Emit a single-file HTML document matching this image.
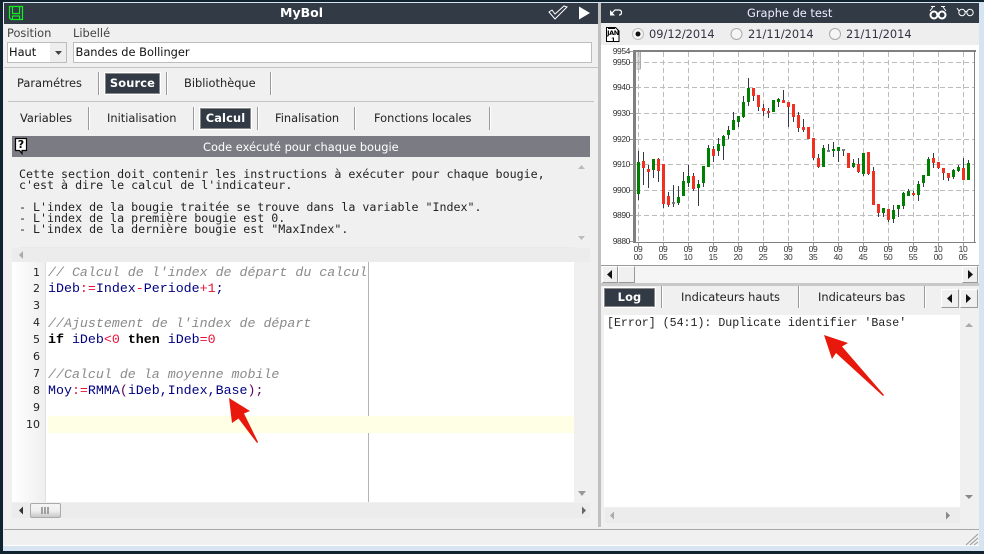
<!DOCTYPE html>
<html><head><meta charset="utf-8"><style>
html,body{margin:0;padding:0}
body{width:984px;height:554px;overflow:hidden;position:relative;background:#d6e4f2;font-family:"DejaVu Sans",sans-serif;font-size:11.4px;color:#222}
div,span.a{position:absolute}
.t{position:absolute;white-space:nowrap;line-height:14px}
.sep{position:absolute;width:1px;background:#9a9a9a;border-right:1px solid #fff}
.btn{position:absolute;background:#323a45;color:#fff;font-weight:bold;text-align:center;border:1px solid #8a8a8a;box-shadow:0 0 0 1px #fff;box-sizing:border-box;white-space:nowrap;letter-spacing:.15px}
.mono{position:absolute;white-space:pre;font-family:"DejaVu Sans Mono",monospace;font-size:11.65px;line-height:11px;color:#222}
.code{position:absolute;left:48px;white-space:pre;font-family:"Liberation Mono",monospace;font-size:13.3px;line-height:16px;color:#000080}
.c{color:#8a8a8a;font-style:italic}.r{color:#e8103a}.k{color:#000;font-weight:bold}.p{color:#600060}
.n{position:absolute;left:14px;width:26px;text-align:right;font-family:"DejaVu Sans",sans-serif;font-size:11px;line-height:14px;color:#222}
svg{position:absolute}
.g3b{position:absolute;background:#f0f0f0;border:1px solid #999;border-top-color:#fff;border-left-color:#fff;box-sizing:border-box}
</style></head><body>
<div style="left:0;top:0;width:984px;height:2px;background:#10232f"></div>
<div style="left:0;top:2px;width:984px;height:1px;background:#d6e4f2"></div>
<div style="left:0;top:0;width:3px;height:554px;background:#10232f"></div>
<div style="left:3px;top:3px;width:1px;height:543px;background:#e8eef4"></div>
<div style="left:0;top:551px;width:984px;height:3px;background:#10232f"></div>
<div style="left:4px;top:3px;width:975px;height:543px;background:#f0f0f0"></div>

<!-- left header -->
<div style="left:4px;top:3px;width:594px;height:21px;background:#323a45"></div>
<svg style="left:8px;top:5px" width="16" height="16" viewBox="0 0 16 16"><path d="M1.500 1.500H14.500V14.500H3L1.500 13ZM4.500 1.500V8.500H11.500V1.500M4.500 14.500V11H11.500V14.500" fill="none" stroke="#12f020" stroke-width="1.200"/></svg>
<div class="t" style="left:280px;top:6px;color:#fff;font-weight:bold;font-size:12.5px;font-family:'DejaVu Sans',sans-serif">MyBol</div>
<svg style="left:546px;top:4px" width="46" height="18" viewBox="0 0 46 18"><path d="M3 8L9 15L21 3L18 2L9 10L6 6Z" fill="none" stroke="#fff" stroke-width="1"/><path d="M33 2.500V15.500L44 9Z" fill="#fff"/></svg>

<div class="t" style="left:7px;top:26px;color:#444">Position</div>
<div class="t" style="left:73px;top:26px;color:#444">Libellé</div>
<div style="left:7px;top:42px;width:60px;height:21px;box-sizing:border-box;border:1px solid #bdbdbd;background:#fff"></div>
<div style="left:50px;top:43px;width:16px;height:19px;background:#eee"></div>
<svg style="left:50px;top:43px" width="16" height="19"><path d="M5 8H12L8.500 12Z" fill="#444"/></svg>
<div class="t" style="left:9px;top:45px;color:#111">Haut</div>
<div style="left:73px;top:42px;width:519px;height:21px;box-sizing:border-box;border:1px solid #bdbdbd;background:#fff"></div>
<div class="t" style="left:75.500px;top:45px;color:#111">Bandes de Bollinger</div>
<div style="left:4px;top:67px;width:594px;height:1px;background:#c4c4c4"></div>

<div class="t" style="left:17px;top:76px">Paramétres</div>
<div class="sep" style="left:98px;top:72px;height:23px"></div>
<div class="btn" style="left:105px;top:73px;width:55px;height:21px;line-height:19px">Source</div>
<div class="sep" style="left:166px;top:72px;height:23px"></div>
<div class="t" style="left:184px;top:76px">Bibliothèque</div>
<div class="sep" style="left:270px;top:72px;height:23px"></div>
<div style="left:8px;top:101px;width:586px;height:1px;background:#c4c4c4"></div>

<div class="t" style="left:20px;top:111px">Variables</div>
<div class="sep" style="left:88px;top:107px;height:23px"></div>
<div class="t" style="left:107px;top:111px">Initialisation</div>
<div class="sep" style="left:193px;top:107px;height:23px"></div>
<div class="btn" style="left:200px;top:108px;width:51px;height:21px;line-height:19px">Calcul</div>
<div class="sep" style="left:257px;top:107px;height:23px"></div>
<div class="t" style="left:275px;top:111px">Finalisation</div>
<div class="sep" style="left:354px;top:107px;height:23px"></div>
<div class="t" style="left:374px;top:111px">Fonctions locales</div>
<div class="sep" style="left:489px;top:107px;height:23px"></div>

<div style="left:12px;top:136px;width:578px;height:21px;background:#7b7b83"></div>
<svg style="left:14px;top:137px" width="15" height="18" viewBox="0 0 15 18"><path d="M1.500 1.500H12.500V13.500H8V16.500L5.500 13.500H1.500Z" fill="#fff" stroke="#000" stroke-width="1.200"/></svg>
<div class="t" style="left:14px;top:138px;width:14px;text-align:center;color:#000;font-weight:bold;font-size:11px;line-height:13px">?</div>
<div class="t" style="left:203px;top:140px;color:#fff">Code exécuté pour chaque bougie</div>

<div class="mono" style="left:19px;top:168.500px">Cette section doit contenir les instructions à exécuter pour chaque bougie,
c'est à dire le calcul de l'indicateur.

- L'index de la bougie traitée se trouve dans la variable "Index".
- L'index de la première bougie est 0.
- L'index de la dernière bougie est "MaxIndex".</div>
<svg style="left:12px;top:157px" width="578" height="106"><path d="M566 12L569.500 8L573 12Z" fill="#bbb"/><path d="M566 79L569.500 83L573 79Z" fill="#bbb"/><path d="M6 91H563" stroke="#e4e4e4" fill="none"/></svg>
<div style="left:12px;top:248px;width:578px;height:14px;background:#ececec"></div>
<svg style="left:17px;top:250px" width="8" height="10"><path d="M2 5L6 1V9Z" fill="#aaa"/></svg>

<!-- editor -->
<div style="left:12px;top:262px;width:562px;height:240px;background:#fff"></div>
<div style="left:12px;top:262px;width:33px;height:240px;background:linear-gradient(90deg,#fff,#efefef)"></div>
<div style="left:45px;top:262px;width:1px;height:240px;background:#e0e0e0"></div>
<div style="left:368px;top:262px;width:1px;height:240px;background:#b4b4b4"></div>
<div style="left:48px;top:416px;width:526px;height:17px;background:#ffffe6"></div>
<div class="n" style="top:266px">1</div><div class="n" style="top:282px">2</div><div class="n" style="top:299px">3</div><div class="n" style="top:316px">4</div><div class="n" style="top:333px">5</div><div class="n" style="top:350px">6</div><div class="n" style="top:367px">7</div><div class="n" style="top:384px">8</div><div class="n" style="top:401px">9</div><div class="n" style="top:418px">10</div>
<div class="code" style="top:265px"><span class="c">// Calcul de l'index de départ du calcul</span></div>
<div class="code" style="top:281px">iDeb<span class="r">:=</span>Index<span class="r">-</span>Periode<span class="r">+1</span>;</div>
<div class="code" style="top:316px"><span class="c">//Ajustement de l'index de départ</span></div>
<div class="code" style="top:332px"><span class="k">if</span> iDeb<span class="r">&lt;0</span> <span class="k">then</span> iDeb<span class="r">=0</span></div>
<div class="code" style="top:367px"><span class="c">//Calcul de la moyenne mobile</span></div>
<div class="code" style="top:383px">Moy<span class="r">:=</span>RMMA<span class="p">(</span>iDeb,Index,Base<span class="p">);</span></div>
<svg style="left:574px;top:262px" width="16" height="256"><path d="M4 229H12L8 234Z" fill="#999"/></svg>
<div style="left:12px;top:503px;width:578px;height:15px;background:#ececec"></div>
<svg style="left:17px;top:505px" width="8" height="11"><path d="M2 5.500L6 1.500V9.500Z" fill="#333"/></svg>
<div style="left:30px;top:503px;width:31px;height:15px;box-sizing:border-box;border:1px solid #aaa;border-radius:2px;background:linear-gradient(#f4f4f4,#f0f0f0 50%,#c8c8c8)"></div>
<svg style="left:40px;top:506px" width="10" height="9"><path d="M2 1V8M5 1V8M8 1V8" stroke="#888" stroke-width="1.500"/></svg>
<svg style="left:580px;top:503px" width="10" height="15"><path d="M2 3.500L6 7.500L2 11.500Z" fill="#666"/></svg>

<!-- splitter -->
<div style="left:598px;top:3px;width:3px;height:524px;background:#c0c0c0"></div>

<!-- right header -->
<div style="left:601px;top:3px;width:378px;height:20px;background:#323a45"></div>
<svg style="left:609px;top:7px" width="14" height="12" viewBox="0 0 14 12"><path d="M1 3L1 8.500L6 8.500Z" fill="#fff"/><path d="M3 6L6 3H10Q12.500 3 12.500 5.500Q12.500 8 10 8" fill="none" stroke="#fff" stroke-width="1.200"/></svg>
<div class="t" style="left:747px;top:6px;color:#eef;font-size:11.4px">Graphe de test</div>
<svg style="left:929px;top:5px" width="46" height="16" viewBox="0 0 46 16"><circle cx="5" cy="10" r="3.500" fill="none" stroke="#fff" stroke-width="2"/><circle cx="13" cy="10" r="3.500" fill="none" stroke="#fff" stroke-width="2"/><path d="M1 6L4 2M17 6L14 2M7 9H11M2 1.500H6M12 1.500H16" stroke="#fff" fill="none"/><circle cx="33" cy="7.500" r="3.200" fill="none" stroke="#fff"/><circle cx="41" cy="7.500" r="3.200" fill="none" stroke="#fff"/><path d="M36 6.500H38M30 6L28 3" stroke="#fff" fill="none"/></svg>
<div style="left:601px;top:23px;width:378px;height:22px;background:#eee"></div>
<svg style="left:606px;top:26px" width="14" height="17" viewBox="0 0 14 17"><path d="M0.500 1.500H9.500L13 5V15.500H0.500Z" fill="#fff" stroke="#000"/><path d="M2 2.500H9" stroke="#000"/></svg>
<div class="t" style="left:606px;top:30px;width:14px;text-align:center;font-size:6.500px;font-weight:bold;color:#000;line-height:6.500px;letter-spacing:-.4px">JAN<br>1</div>
<svg style="left:630px;top:26px" width="220" height="16"><circle cx="8" cy="8" r="5.500" fill="#f6f6f6" stroke="#bbb"/><circle cx="8" cy="8" r="2.500" fill="#111"/><circle cx="106.500" cy="8" r="5.500" fill="#f6f6f6" stroke="#aaa"/><circle cx="205" cy="8" r="5.500" fill="#f6f6f6" stroke="#aaa"/></svg>
<div class="t" style="left:649px;top:27px;color:#334">09/12/2014</div>
<div class="t" style="left:748px;top:27px;color:#334">21/11/2014</div>
<div class="t" style="left:846px;top:27px;color:#334">21/11/2014</div>

<!-- chart -->
<div style="left:601px;top:45px;width:378px;height:220px;background:#fff"></div>
<svg style="left:601px;top:45px" width="378" height="220" viewBox="601 45 378 220" font-family="Liberation Sans, sans-serif" font-size="8.500" fill="#333" letter-spacing="-.4">
<g stroke="#bcbcbc" stroke-dasharray="5 3" fill="none"><path d="M636 62.500H974M636 87.500H974M636 113.500H974M636 139.500H974M636 164.500H974M636 190.500H974M636 215.500H974"/><path d="M638.500 52V242M663.500 52V242M688.500 52V242M713.500 52V242M738.500 52V242M763.500 52V242M788.500 52V242M813.500 52V242M838.500 52V242M863.500 52V242M888.500 52V242M913.500 52V242M938.500 52V242M963.500 52V242"/></g>
<path d="M634.500 51V243M633.500 51V243M635.500 51V243M633 50.500H976M633 51.500H976M974.500 50V243M633 242.500H976" stroke="#808080" fill="none"/>
<path d="M629 51.500H634M629 62.500H634M629 87.500H634M629 113.500H634M629 139.500H634M629 164.500H634M629 190.500H634M629 215.500H634M629 241.500H634M638.500 243V247M663.500 243V247M688.500 243V247M713.500 243V247M738.500 243V247M763.500 243V247M788.500 243V247M813.500 243V247M838.500 243V247M863.500 243V247M888.500 243V247M913.500 243V247M938.500 243V247M963.500 243V247" stroke="#999" fill="none"/>
<path d="M636.500 53H640.500M636.500 55H640.500M636.500 57H640.500M636.500 59H640.500M636.500 61H640.500M636.500 63H640.500M636.500 65H640.500M636.500 67H640.500M636.500 69H640.500M640.500 52V69" stroke="#aaa" fill="none"/>
<path stroke="#333a44" fill="none" d="M638.500 151V200M643.500 152V185M648.500 165V188M653.500 159V178M658.500 158V182M663.500 164V208M668.500 192V207M673.500 185V207M678.500 186V205M683.500 172V196M688.500 165V187M693.500 173V191M698.500 180V206M703.500 166V187M708.500 145V167M713.500 146V162M718.500 138V156M723.500 135V160M728.500 126V139M733.500 112V130M738.500 116V127M743.500 96V118M748.500 78V106M753.500 88V101M758.500 95V111M763.500 104V116M768.500 108V118M773.500 100V112M778.500 98V107M783.500 90V103M788.500 102V127M793.500 104V122M798.500 112V132M803.500 119V132M808.500 127V139M813.500 138V160M818.500 154V168M823.500 145V167M828.500 144V152M833.500 142V157M838.500 147V162M843.500 149V156M848.500 153V168M853.500 159V168M858.500 158V173M863.500 153V176M868.500 152V175M873.500 167V205M878.500 204V217M883.500 208V217M888.500 209V222M893.500 205V223M898.500 205V217M903.500 192V209M908.500 189V196M913.500 191V196M918.500 181V201M923.500 175V187M928.500 157V176M933.500 153V168M938.500 162V169M943.500 168V180M948.500 173V181M953.500 169V179M958.500 165V172M963.500 158V180M968.500 160V180"/>
<path stroke="#008000" stroke-width="3" fill="none" d="M638.500 162V194M653.500 159V170M678.500 197V203M683.500 181V196M688.500 176V183M698.500 184V188M703.500 166V183M708.500 148V167M718.500 144V151M723.500 136V146M728.500 130V135M733.500 120V130M738.500 116V122M743.500 102V117M748.500 88V102M773.500 100V112M778.500 99V102M823.500 148V167M833.500 149V151M838.500 147V151M853.500 163V167M863.500 153V174M883.500 208V213M893.500 210V219M898.500 205V209M903.500 193V206M908.500 191V196M918.500 184V195M923.500 175V183M928.500 159V176M953.500 170V177M958.500 167V171M968.500 163V180"/>
<path stroke="#f03020" stroke-width="3" fill="none" d="M643.500 161V168M648.500 169V172M658.500 159V171M663.500 164V204M668.500 196V205M693.500 176V189M713.500 149V156M753.500 88V96M758.500 95V107M763.500 108V111M768.500 111V113M783.500 100V103M788.500 102V107M793.500 104V117M798.500 115V128M803.500 127V130M808.500 127V139M813.500 138V158M818.500 158V167M848.500 153V168M858.500 164V172M868.500 152V174M873.500 171V205M878.500 204V213M888.500 209V220M913.500 193V195M933.500 158V163M938.500 162V168M943.500 168V173M948.500 173V178M963.500 168V180"/>
<path stroke="#777a80" stroke-width="3" fill="none" d="M673.500 202V204M828.500 150V152M843.500 149V151"/>
<g text-anchor="end"><text x="630" y="54">9954</text><text x="630" y="65">9950</text><text x="630" y="90">9940</text><text x="630" y="116">9930</text><text x="630" y="142">9920</text><text x="630" y="167">9910</text><text x="630" y="193">9900</text><text x="630" y="218">9890</text><text x="630" y="244">9880</text></g>
<g text-anchor="middle"><text x="638" y="252">09</text><text x="638" y="260">00</text><text x="663" y="252">09</text><text x="663" y="260">05</text><text x="688" y="252">09</text><text x="688" y="260">10</text><text x="713" y="252">09</text><text x="713" y="260">15</text><text x="738" y="252">09</text><text x="738" y="260">20</text><text x="763" y="252">09</text><text x="763" y="260">25</text><text x="788" y="252">09</text><text x="788" y="260">30</text><text x="813" y="252">09</text><text x="813" y="260">35</text><text x="838" y="252">09</text><text x="838" y="260">40</text><text x="863" y="252">09</text><text x="863" y="260">45</text><text x="888" y="252">09</text><text x="888" y="260">50</text><text x="913" y="252">09</text><text x="913" y="260">55</text><text x="938" y="252">10</text><text x="938" y="260">00</text><text x="963" y="252">10</text><text x="963" y="260">05</text></g>
</svg>
<div style="left:601px;top:265px;width:378px;height:18px;background:#f5f5f5;border-top:1px solid #999;box-sizing:border-box"></div>
<div class="g3b" style="left:602px;top:266px;width:16px;height:17px"></div>
<svg style="left:602px;top:266px" width="16" height="17"><path d="M5 8.500L10 4V13Z" fill="#111"/></svg>
<div class="g3b" style="left:618px;top:266px;width:17px;height:17px"></div>
<div class="g3b" style="left:962px;top:266px;width:16px;height:17px"></div>
<svg style="left:962px;top:266px" width="16" height="17"><path d="M6 4L11 8.500L6 13Z" fill="#111"/></svg>
<div style="left:601px;top:283px;width:378px;height:3px;background:#c8c8c8"></div>

<!-- bottom tabs -->
<div class="btn" style="left:604px;top:288px;width:51px;height:19px;line-height:17px">Log</div>
<div class="sep" style="left:661px;top:286px;height:22px"></div>
<div class="t" style="left:681px;top:290px">Indicateurs hauts</div>
<div class="sep" style="left:798px;top:286px;height:22px"></div>
<div class="t" style="left:818px;top:290px">Indicateurs bas</div>
<div class="sep" style="left:924px;top:286px;height:22px"></div>
<div class="g3b" style="left:941px;top:289px;width:18px;height:19px"></div>
<div class="g3b" style="left:960px;top:289px;width:18px;height:19px"></div>
<svg style="left:941px;top:289px" width="37" height="19"><path d="M6 9.500L11 5V14Z" fill="#111"/><path d="M25 5L30 9.500L25 14Z" fill="#111"/></svg>

<div style="left:604px;top:315px;width:356px;height:192px;background:#fff"></div>
<div style="left:607px;top:317px;position:absolute;white-space:pre;font-family:'Liberation Mono',monospace;font-size:11.600px;line-height:14px;color:#222">[Error] (54:1): Duplicate identifier 'Base'</div>
<svg style="left:960px;top:315px" width="18" height="190"><path d="M5 12L9 8L13 12Z" fill="#aaa"/><path d="M5 180H13L9 184Z" fill="#888"/></svg>
<div style="left:605px;top:508px;width:355px;height:15px;background:#ececec"></div>
<svg style="left:608px;top:510px" width="346" height="11"><path d="M2 5.500L6 1.500V9.500Z" fill="#aaa"/><path d="M338 1.500L342 5.500L338 9.500Z" fill="#888"/></svg>

<!-- red arrows -->
<svg style="left:0;top:0" width="984" height="554"><path d="M229 398L250 411L244 413.500L258 442L257 443L238.500 418.500L232 423Z" fill="#e8180c"/><path d="M824 335L848 343L842 346.500L884 395L883 396L836 353L832 359Z" fill="#e8180c"/></svg>

<!-- status -->
<div style="left:4px;top:529px;width:975px;height:1px;background:#a8a8a8"></div>
<div style="left:4px;top:545px;width:975px;height:1px;background:#fff"></div>
<svg style="left:965px;top:533px" width="14" height="13"><path d="M1 12L13 1M5 12L13 5M9 12L13 9" stroke="#999" fill="none"/></svg>
</body></html>
